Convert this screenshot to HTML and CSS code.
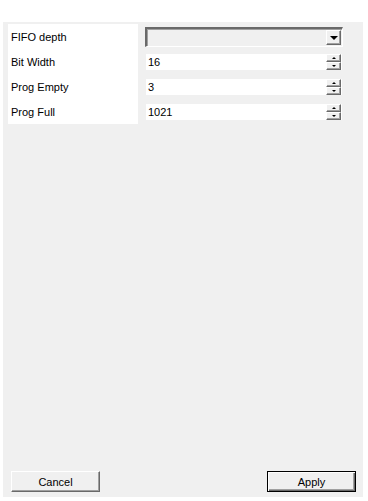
FILE: index.html
```html
<!DOCTYPE html>
<html>
<head>
<meta charset="utf-8">
<link rel="stylesheet" href="styles.css">
</head>
<body>
<div class="panel">
  <div class="form">
    <div class="labels">
      <div class="label">FIFO depth</div>
      <div class="label">Bit Width</div>
      <div class="label">Prog Empty</div>
      <div class="label">Prog Full</div>
    </div>
    <div class="controls">
      <div class="combo">
        <div class="combo-btn"><span class="tri-down big"></span></div>
      </div>
      <div class="spin">
        <span class="value">16</span>
        <div class="spin-btns">
          <div class="sbtn"><span class="tri-up"></span></div>
          <div class="sbtn"><span class="tri-down"></span></div>
        </div>
      </div>
      <div class="spin">
        <span class="value">3</span>
        <div class="spin-btns">
          <div class="sbtn"><span class="tri-up"></span></div>
          <div class="sbtn"><span class="tri-down"></span></div>
        </div>
      </div>
      <div class="spin">
        <span class="value">1021</span>
        <div class="spin-btns">
          <div class="sbtn"><span class="tri-up"></span></div>
          <div class="sbtn"><span class="tri-down"></span></div>
        </div>
      </div>
    </div>
  </div>
  <div class="actions">
    <button class="btn">Cancel</button>
    <button class="btn default">Apply</button>
  </div>
</div>
</body>
</html>
```
FILE: styles.css
```css
html, body {
  margin: 0;
  padding: 0;
  background: #ffffff;
}
body {
  font-family: "Liberation Sans", Arial, sans-serif;
  font-size: 11px;
  color: #000;
}
.panel {
  margin: 22px 0 0 3px;
  width: 360px;
  height: 475px;
  background: #f0f0f0;
  display: flex;
  flex-direction: column;
  box-sizing: border-box;
}
.form {
  display: flex;
  margin: 2px 0 0 5px;
}
.labels {
  width: 130px;
  height: 100px;
  background: #fff;
  display: flex;
  flex-direction: column;
}
.label {
  height: 25px;
  line-height: 26px;
  padding-left: 3px;
}
.controls {
  margin-left: 7px;
  padding-top: 3px;
  display: flex;
  flex-direction: column;
}
.combo {
  width: 198px;
  height: 20px;
  box-sizing: border-box;
  background: #f0f0f0;
  border-top: 2px solid #696969;
  border-left: 2px solid #696969;
  border-right: 1px solid #fff;
  border-bottom: 1px solid #fff;
  box-shadow: inset 1px 1px 0 #a0a0a0;
  display: flex;
  justify-content: flex-end;
  padding: 1px 1px 1px 0;
  margin-bottom: 7px;
}
.combo-btn {
  width: 15px;
  height: 15px;
  box-sizing: border-box;
  background: #f0f0f0;
  border-top: 1px solid #fff;
  border-left: 1px solid #fff;
  border-right: 1px solid #696969;
  border-bottom: 1px solid #696969;
  box-shadow: inset -1px -1px 0 #a0a0a0;
  display: flex;
  align-items: center;
  justify-content: center;
}
.spin {
  width: 196px;
  height: 16px;
  margin-left: 1px;
  margin-bottom: 9px;
  background: #fff;
  display: flex;
  align-items: center;
  justify-content: space-between;
}
.value {
  padding-left: 2px;
  line-height: 16px;
}
.spin-btns {
  width: 15px;
  height: 16px;
  display: flex;
  flex-direction: column;
  margin-right: 1px;
}
.sbtn {
  height: 8px;
  box-sizing: border-box;
  background: #f0f0f0;
  border-top: 1px solid #fff;
  border-left: 1px solid #fff;
  border-right: 1px solid #696969;
  border-bottom: 1px solid #696969;
  box-shadow: inset -1px -1px 0 #a0a0a0;
  display: flex;
  align-items: center;
  justify-content: center;
}
.tri-down {
  width: 0;
  height: 0;
  border-left: 2px solid transparent;
  border-right: 2px solid transparent;
  border-top: 2px solid #000;
}
.tri-up {
  width: 0;
  height: 0;
  border-left: 2px solid transparent;
  border-right: 2px solid transparent;
  border-bottom: 2px solid #000;
}
.tri-down.big {
  border-left-width: 4px;
  border-right-width: 4px;
  border-top-width: 4px;
}
.actions {
  margin-top: auto;
  display: flex;
  justify-content: space-between;
  padding: 0 7px 5px 8px;
}
.btn {
  width: 89px;
  height: 21px;
  box-sizing: border-box;
  font-family: "Liberation Sans", Arial, sans-serif;
  font-size: 11px;
  color: #000;
  background: #f0f0f0;
  border-top: 1px solid #fff;
  border-left: 1px solid #fff;
  border-right: 1px solid #696969;
  border-bottom: 1px solid #696969;
  box-shadow: inset -1px -1px 0 #a0a0a0;
  padding: 0;
  margin: 0;
}
.btn.default {
  border: 1px solid #000;
  box-shadow: inset 1px 1px 0 #fff, inset -1px -1px 0 #696969, inset -2px -2px 0 #a0a0a0;
}
```
